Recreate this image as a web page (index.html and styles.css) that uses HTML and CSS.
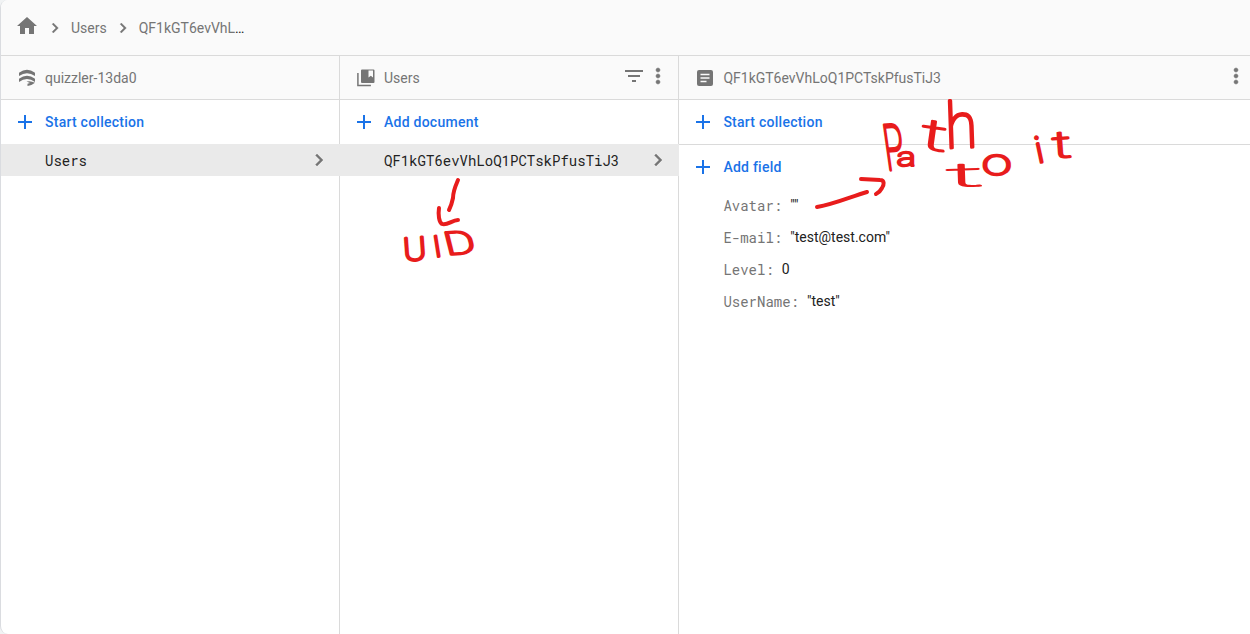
FILE: index.html
```html
<!DOCTYPE html>
<html lang="en">
<head>
<meta charset="utf-8">
<title>Firestore data</title>
<link rel="stylesheet" href="styles.css">
</head>
<body>
<svg width="0" height="0" class="defs">
  <symbol id="plus" viewBox="0 0 16 16"><path d="M8 1v14M1 8h14" fill="none" stroke="currentColor" stroke-width="2"/></symbol>
  <symbol id="chevron" viewBox="0 0 24 24"><path d="M10 6 8.590 7.410 13.170 12l-4.580 4.590L10 18l6-6z" fill="currentColor" stroke="currentColor" stroke-width=".4"/></symbol>
  <symbol id="more" viewBox="0 0 24 24"><path d="M12 8c1.100 0 2-.9 2-2s-.9-2-2-2-2 .9-2 2 .9 2 2 2zm0 2c-1.100 0-2 .9-2 2s.9 2 2 2 2-.9 2-2-.9-2-2-2zm0 6c-1.100 0-2 .9-2 2s.9 2 2 2 2-.9 2-2-.9-2-2-2z" fill="currentColor" stroke="currentColor" stroke-width=".5"/></symbol>
</svg>
<main class="card">
  <nav class="crumbs">
    <svg class="home" viewBox="0 0 24 24"><path d="M10 20v-6h4v6h5v-8h3L12 3 2 12h3v8z" fill="currentColor"/></svg>
    <svg class="sep"><use href="#chevron"/></svg>
    <span>Users</span>
    <svg class="sep"><use href="#chevron"/></svg>
    <span>QF1kGT6evVhL<b class="dots">…</b></span>
  </nav>
  <div class="columns">
    <section class="column">
      <header class="head">
        <svg class="head-icon" viewBox="0 0 18 18"><path d="M1 3.800Q9-2.200 17 3.800v3.200Q9 1.400 1 7zM1 9.700Q9 3.700 17 9.700v3.200Q9 7.300 1 12.900zM8.500 12.600q4-1.200 8.500 1.200-3 2.700-7.500 3.200v-2.200l2.500-.8z" fill="currentColor"/></svg>
        <span>quizzler-13da0</span>
      </header>
      <div class="action"><svg><use href="#plus"/></svg>Start collection</div>
      <div class="item"><span>Users</span><svg><use href="#chevron"/></svg></div>
    </section>
    <section class="column">
      <header class="head">
        <svg class="head-icon" viewBox="0 0 18 18"><path d="M.9 4v12.500h13" fill="none" stroke="currentColor" stroke-width="1.500"/><path d="M5 .5h11.500a1 1 0 0 1 1 1v11.500a1 1 0 0 1-1 1H5a1 1 0 0 1-1-1V1.500a1 1 0 0 1 1-1zm6.500 1v7l2.300-1.700L16 8.500v-7z" fill="currentColor" fill-rule="evenodd"/></svg>
        <span>Users</span>
        <span class="tools">
          <svg viewBox="0 0 24 24"><path d="M10 18h4v-2h-4zM3 6v2h18V6zm3 7h12v-2H6z" fill="currentColor"/></svg>
          <svg><use href="#more"/></svg>
        </span>
      </header>
      <div class="action"><svg><use href="#plus"/></svg>Add document</div>
      <div class="item"><span>QF1kGT6evVhLoQ1PCTskPfusTiJ3</span><svg><use href="#chevron"/></svg></div>
    </section>
    <section class="column wide">
      <header class="head">
        <svg class="head-icon" viewBox="0 0 18 18"><rect x="1" y="1" width="16" height="16" rx="2" fill="currentColor"/><path d="M4.500 5.500h9M4.500 9h9M4.500 12.500h6" stroke="#fafafa" stroke-width="1.400"/></svg>
        <span>QF1kGT6evVhLoQ1PCTskPfusTiJ3</span>
        <span class="tools end"><svg><use href="#more"/></svg></span>
      </header>
      <div class="action ruled"><svg><use href="#plus"/></svg>Start collection</div>
      <div class="action"><svg><use href="#plus"/></svg>Add field</div>
      <dl class="fields">
        <div><dt>Avatar:</dt><dd>""</dd></div>
        <div><dt>E-mail:</dt><dd>"test@test.com"</dd></div>
        <div><dt>Level:</dt><dd>0</dd></div>
        <div><dt>UserName:</dt><dd>"test"</dd></div>
      </dl>
    </section>
  </div>
</main>
<svg class="ink" viewBox="0 0 1250 634">
  <g class="arrow">
    <path d="M458 180c-3 7-5 11-5 18-1 5-2 8-4 12"/>
    <path d="M439 208c-1 7 0 14 3 16 5 2 10-4 16-4"/>
    <path d="M817 207c18-3 33-10 50-15"/>
    <path d="M861 179l19 1c5 0 4 5 2 8q-2 4-6 6"/>
  </g>
  <g class="note">
    <text transform="translate(404 261) rotate(-4) scale(1.080 1)" font-size="32">U</text>
    <text transform="translate(435 257) rotate(-9)" font-size="29">I</text>
    <text transform="translate(447 255) rotate(-4) skewX(10) scale(1.450 1)" font-size="32">D</text>
    <text transform="translate(887 170) rotate(-4) skewX(4) scale(.52 1)" font-size="63">P</text>
    <text transform="translate(897 166) scale(1.350 1)" font-size="26">a</text>
    <text transform="translate(919 148) rotate(8) scale(2 1)" font-size="43">t</text>
    <text transform="translate(946 148) rotate(-2) scale(.92 1)" font-size="63">h</text>
    <text transform="translate(946 187) rotate(-2) scale(3.700 1)" font-size="33">t</text>
    <text transform="translate(982 175) scale(1.450 1)" font-size="37">o</text>
    <text transform="translate(1038 163) rotate(-12)" font-size="36">i</text>
    <text transform="translate(1053 158) rotate(-4) scale(1.650 1)" font-size="37">t</text>
  </g>
</svg>
</body>
</html>
```

FILE: styles.css
```css
* { box-sizing: border-box; }
body {
  margin: 0;
  height: 634px;
  overflow: hidden;
  background: #f1f3f4;
  color: #757575;
  font: 14px/20px Roboto, "Liberation Sans", sans-serif;
}
.defs { position: absolute; }
svg { flex: none; }
.card {
  height: 634px;
  display: flex;
  flex-direction: column;
  overflow: hidden;
  background: #fff;
  border-left: 1px solid #dadce0;
  border-radius: 8px 0 0 8px;
}
.crumbs {
  flex: none;
  display: flex;
  align-items: center;
  height: 56px;
  padding-left: 14px;
  background: #fafafa;
  border-bottom: 1px solid #dadada;
}
.home { width: 24px; height: 24px; margin: -3px 6px 0 0; }
.sep { width: 20px; height: 20px; }
.sep + span { margin: 0 6px 0 6px; }
.dots { font-weight: 400; color: #212121; }
.columns { flex: 1; display: grid; grid-template-columns: 339px 339px 1fr; }
.column { border-right: 1px solid #dadada; min-width: 0; }
.column.wide { border-right: 0; }
.head {
  display: flex;
  align-items: center;
  height: 44px;
  padding-left: 17px;
  background: #fafafa;
  border-bottom: 1px solid #dadada;
}
.head-icon { width: 18px; height: 18px; margin-right: 9px; }
.wide .head { padding-left: 17.4px; }
.tools { display: flex; margin: -4px 8px 0 auto; }
.tools svg { width: 24px; height: 24px; }
.tools.end { margin-right: 2px; }
.action {
  display: flex;
  align-items: center;
  height: 44px;
  padding-left: 16px;
  color: #1a73e8;
  font-weight: 500;
  letter-spacing: .25px;
}
.wide .action { padding-left: 16.4px; }
.action svg { width: 16px; height: 16px; margin-right: 12px; }
.action.ruled { height: 45px; border-bottom: 1px solid #dadada; }
.item {
  display: flex;
  align-items: center;
  justify-content: space-between;
  height: 32px;
  padding: 0 9px 0 44px;
  margin-right: -1px;
  background: #eaeaea;
  color: #212121;
  font-family: "Roboto Mono", "DejaVu Sans Mono", monospace;
}
.item span { padding-top: 1px; }
.item svg { width: 24px; height: 24px; color: #757575; }
.fields { margin: 1px 0 0 44.4px; }
.fields div { display: flex; align-items: center; height: 32px; }
.fields dt { font-family: "Roboto Mono", "Liberation Mono", monospace; }
.fields dd { margin: -2px 0 0 8px; color: #212121; }
.ink { position: absolute; left: 0; top: 0; width: 1250px; height: 634px; pointer-events: none; }
.arrow { fill: none; stroke: #e81c1c; stroke-width: 4; stroke-linecap: round; stroke-linejoin: round; }
.note {
  fill: #e81c1c;
  stroke: #e81c1c;
  stroke-width: 3;
  stroke-linejoin: round;
  font-family: Roboto, sans-serif;
  font-weight: 100;
}
.note text { vector-effect: non-scaling-stroke; }
```
